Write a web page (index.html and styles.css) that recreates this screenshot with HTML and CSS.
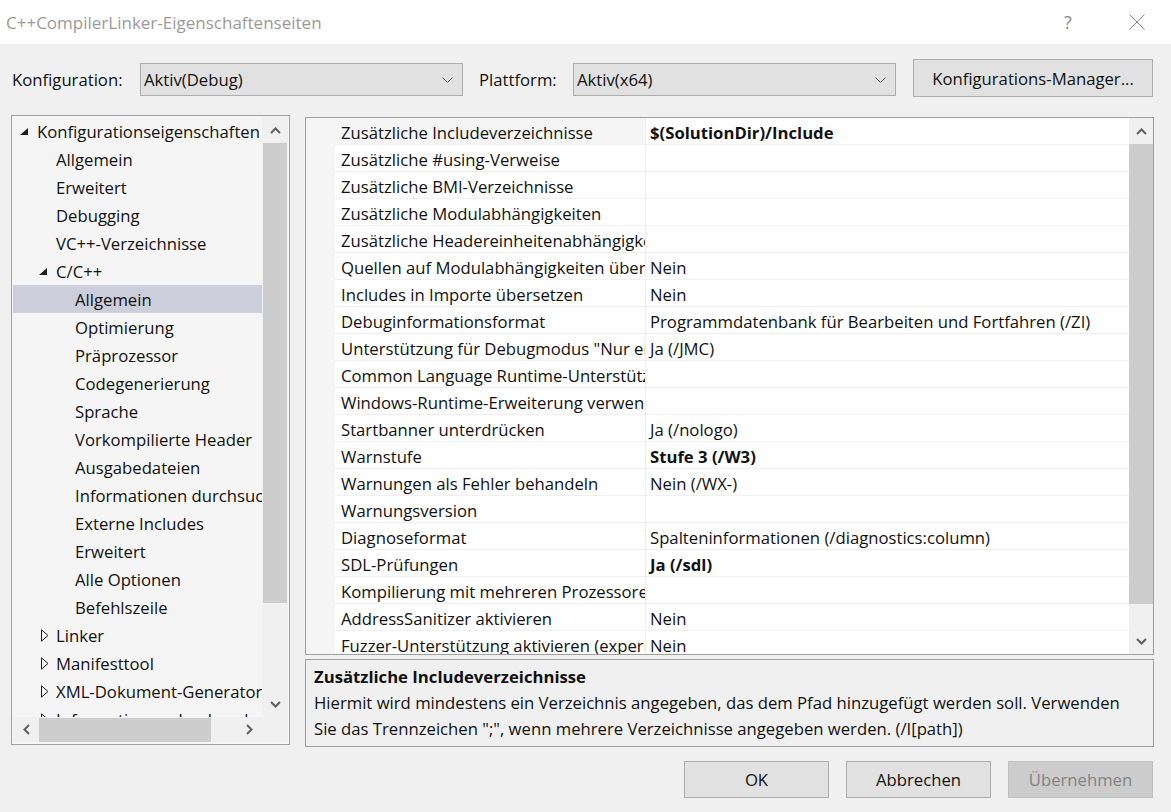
FILE: index.html
```html
<!DOCTYPE html>
<html lang="de">
<head>
<meta charset="utf-8">
<title>C++CompilerLinker-Eigenschaftenseiten</title>
<link rel="stylesheet" href="styles.css">
</head>
<body>
<div class="dialog">
  <header class="titlebar">
    <span class="title">C++CompilerLinker-Eigenschaftenseiten</span>
    <span class="tb-btn tb-help">?</span>
    <span class="tb-btn tb-close">
      <svg width="16" height="16" viewBox="0 0 16 16"><path d="M0.5 0.5 L15.5 15.5 M15.5 0.5 L0.5 15.5" stroke="#8a8a8a" stroke-width="1" fill="none"/></svg>
    </span>
  </header>

  <div class="content">
    <div class="config-row">
      <span class="lbl lbl-config">Konfiguration:</span>
      <div class="select">
        <span class="select-text">Aktiv(Debug)</span>
        <svg class="chev" width="11" height="6" viewBox="0 0 11 6"><path d="M0.5 0.5 L5.5 5.5 L10.5 0.5" stroke="#5a5a5a" stroke-width="1" fill="none"/></svg>
      </div>
      <span class="lbl lbl-plat">Plattform:</span>
      <div class="select">
        <span class="select-text">Aktiv(x64)</span>
        <svg class="chev" width="11" height="6" viewBox="0 0 11 6"><path d="M0.5 0.5 L5.5 5.5 L10.5 0.5" stroke="#5a5a5a" stroke-width="1" fill="none"/></svg>
      </div>
      <button class="btn btn-manager">Konfigurations-Manager...</button>
    </div>

    <div class="main">
      <div class="tree">
        <div class="tree-top">
          <div class="tree-list">
            <div class="trow lvl0"><span class="tog"><svg width="8" height="7" viewBox="0 0 8 7"><path d="M8 0 L8 7 L0 7 Z" fill="#1e1e1e"/></svg></span>Konfigurationseigenschaften</div>
            <div class="trow lvl1"><span class="tog"></span>Allgemein</div>
            <div class="trow lvl1"><span class="tog"></span>Erweitert</div>
            <div class="trow lvl1"><span class="tog"></span>Debugging</div>
            <div class="trow lvl1"><span class="tog"></span>VC++-Verzeichnisse</div>
            <div class="trow lvl0b"><span class="tog"><svg width="8" height="7" viewBox="0 0 8 7"><path d="M8 0 L8 7 L0 7 Z" fill="#1e1e1e"/></svg></span>C/C++</div>
            <div class="trow lvl2 selected"><span class="tog"></span>Allgemein</div>
            <div class="trow lvl2"><span class="tog"></span>Optimierung</div>
            <div class="trow lvl2"><span class="tog"></span>Präprozessor</div>
            <div class="trow lvl2"><span class="tog"></span>Codegenerierung</div>
            <div class="trow lvl2"><span class="tog"></span>Sprache</div>
            <div class="trow lvl2"><span class="tog"></span>Vorkompilierte Header</div>
            <div class="trow lvl2"><span class="tog"></span>Ausgabedateien</div>
            <div class="trow lvl2"><span class="tog"></span>Informationen durchsuchen</div>
            <div class="trow lvl2"><span class="tog"></span>Externe Includes</div>
            <div class="trow lvl2"><span class="tog"></span>Erweitert</div>
            <div class="trow lvl2"><span class="tog"></span>Alle Optionen</div>
            <div class="trow lvl2"><span class="tog"></span>Befehlszeile</div>
            <div class="trow lvl0b"><span class="tog tog-c"><svg width="8" height="13" viewBox="0 0 8 13"><path d="M0.5 0.8 L7 6.5 L0.5 12.2 Z" fill="none" stroke="#1e1e1e" stroke-width="1"/></svg></span>Linker</div>
            <div class="trow lvl0b"><span class="tog tog-c"><svg width="8" height="13" viewBox="0 0 8 13"><path d="M0.5 0.8 L7 6.5 L0.5 12.2 Z" fill="none" stroke="#1e1e1e" stroke-width="1"/></svg></span>Manifesttool</div>
            <div class="trow lvl0b"><span class="tog tog-c"><svg width="8" height="13" viewBox="0 0 8 13"><path d="M0.5 0.8 L7 6.5 L0.5 12.2 Z" fill="none" stroke="#1e1e1e" stroke-width="1"/></svg></span>XML-Dokument-Generator</div>
            <div class="trow lvl0b"><span class="tog tog-c"><svg width="8" height="13" viewBox="0 0 8 13"><path d="M0.5 0.8 L7 6.5 L0.5 12.2 Z" fill="none" stroke="#1e1e1e" stroke-width="1"/></svg></span>Informationen durchsuchen</div>
          </div>
          <div class="vscroll tree-vscroll">
            <div class="arrow-box"><svg width="11" height="7" viewBox="0 0 11 7"><path d="M1 6 L5.5 1.5 L10 6" stroke="#606060" stroke-width="2" fill="none"/></svg></div>
            <div class="vthumb tree-vthumb"></div>
            <div class="vspace"></div>
            <div class="arrow-box"><svg width="11" height="7" viewBox="0 0 11 7"><path d="M1 1 L5.5 5.5 L10 1" stroke="#606060" stroke-width="2" fill="none"/></svg></div>
          </div>
        </div>
        <div class="hscroll-row">
          <div class="hscroll">
            <div class="harrow-box"><svg width="7" height="11" viewBox="0 0 7 11"><path d="M6 1 L1.5 5.5 L6 10" stroke="#606060" stroke-width="2" fill="none"/></svg></div>
            <div class="hthumb"></div>
            <div class="hspace"></div>
            <div class="harrow-box"><svg width="7" height="11" viewBox="0 0 7 11"><path d="M1 1 L5.5 5.5 L1 10" stroke="#606060" stroke-width="2" fill="none"/></svg></div>
          </div>
          <div class="corner"></div>
        </div>
      </div>

      <div class="right">
        <div class="grid">
          <div class="gutter"></div>
          <div class="grid-rows">
            <div class="prow sel"><div class="pname">Zusätzliche Includeverzeichnisse</div><div class="pval b">$(SolutionDir)/Include</div></div>
            <div class="prow"><div class="pname">Zusätzliche #using-Verweise</div><div class="pval"></div></div>
            <div class="prow"><div class="pname">Zusätzliche BMI-Verzeichnisse</div><div class="pval"></div></div>
            <div class="prow"><div class="pname">Zusätzliche Modulabhängigkeiten</div><div class="pval"></div></div>
            <div class="prow"><div class="pname">Zusätzliche Headereinheitenabhängigkeiten</div><div class="pval"></div></div>
            <div class="prow"><div class="pname">Quellen auf Modulabhängigkeiten überprüfen</div><div class="pval">Nein</div></div>
            <div class="prow"><div class="pname">Includes in Importe übersetzen</div><div class="pval">Nein</div></div>
            <div class="prow"><div class="pname">Debuginformationsformat</div><div class="pval">Programmdatenbank für Bearbeiten und Fortfahren (/ZI)</div></div>
            <div class="prow"><div class="pname">Unterstützung für Debugmodus "Nur eigenen Code"</div><div class="pval">Ja (/JMC)</div></div>
            <div class="prow"><div class="pname">Common Language Runtime-Unterstützung</div><div class="pval"></div></div>
            <div class="prow"><div class="pname">Windows-Runtime-Erweiterung verwenden</div><div class="pval"></div></div>
            <div class="prow"><div class="pname">Startbanner unterdrücken</div><div class="pval">Ja (/nologo)</div></div>
            <div class="prow"><div class="pname">Warnstufe</div><div class="pval b">Stufe 3 (/W3)</div></div>
            <div class="prow"><div class="pname">Warnungen als Fehler behandeln</div><div class="pval">Nein (/WX-)</div></div>
            <div class="prow"><div class="pname">Warnungsversion</div><div class="pval"></div></div>
            <div class="prow"><div class="pname">Diagnoseformat</div><div class="pval">Spalteninformationen (/diagnostics:column)</div></div>
            <div class="prow"><div class="pname">SDL-Prüfungen</div><div class="pval b">Ja (/sdl)</div></div>
            <div class="prow"><div class="pname">Kompilierung mit mehreren Prozessoren</div><div class="pval"></div></div>
            <div class="prow"><div class="pname">AddressSanitizer aktivieren</div><div class="pval">Nein</div></div>
            <div class="prow"><div class="pname">Fuzzer-Unterstützung aktivieren (experimentell)</div><div class="pval">Nein</div></div>
          </div>
          <div class="vscroll grid-vscroll">
            <div class="arrow-box"><svg width="11" height="7" viewBox="0 0 11 7"><path d="M1 6 L5.5 1.5 L10 6" stroke="#606060" stroke-width="2" fill="none"/></svg></div>
            <div class="vthumb grid-vthumb"></div>
            <div class="vspace"></div>
            <div class="arrow-box"><svg width="11" height="7" viewBox="0 0 11 7"><path d="M1 1 L5.5 5.5 L10 1" stroke="#606060" stroke-width="2" fill="none"/></svg></div>
          </div>
        </div>
        <div class="desc">
          <div class="desc-title">Zusätzliche Includeverzeichnisse</div>
          <div class="desc-line">Hiermit wird mindestens ein Verzeichnis angegeben, das dem Pfad hinzugefügt werden soll. Verwenden</div>
          <div class="desc-line">Sie das Trennzeichen ";", wenn mehrere Verzeichnisse angegeben werden. (/I[path])</div>
        </div>
      </div>
    </div>

    <div class="buttons">
      <button class="btn btn-dlg">OK</button>
      <button class="btn btn-dlg">Abbrechen</button>
      <button class="btn btn-dlg btn-disabled">Übernehmen</button>
    </div>
  </div>
</div>
</body>
</html>
```

FILE: styles.css
```css
* { box-sizing: border-box; }
html, body { margin: 0; padding: 0; }
body {
  width: 1171px;
  height: 812px;
  overflow: hidden;
  background: #f0f0f0;
  font-family: "Open Sans", "Noto Sans", sans-serif;
  font-size: 16.7px;
  color: #111;
}
.dialog { width: 1171px; height: 812px; }

/* title bar */
.titlebar {
  height: 44px;
  background: #fff;
  display: flex;
  align-items: center;
  padding-right: 11px;
}
.title {
  flex: 1;
  padding-left: 6px;
  font-size: 17px;
  color: #9a9a9a;
  white-space: nowrap;
}
.tb-btn {
  width: 46px;
  height: 44px;
  display: flex;
  align-items: center;
  justify-content: center;
}
.tb-help { color: #8a8a8a; font-size: 18px; margin-right: 23px; }

.content { padding: 0 17px 0 11px; }

/* configuration row */
.config-row {
  margin-top: 15px;
  height: 38px;
  display: flex;
  align-items: flex-start;
}
.lbl {
  margin-top: 4px;
  height: 33px;
  line-height: 33px;
  white-space: nowrap;
}
.lbl-config { width: 129px; padding-left: 1px; }
.lbl-plat { width: 94px; margin-left: 16px; padding-left: 0; }
.select {
  margin-top: 4px;
  width: 323px;
  height: 33px;
  background: #e1e1e1;
  border: 1px solid #adadad;
  display: flex;
  align-items: center;
  padding: 0 9px 0 3px;
}
.select-text { flex: 1; }
.btn {
  font-family: inherit;
  font-size: 16.7px;
  color: #111;
  background: #e1e1e1;
  border: 1px solid #adadad;
  padding: 0;
  border-radius: 0;
}
.btn-manager {
  margin-left: 17px;
  width: 240px;
  height: 38px;
}

/* main area */
.main {
  margin-top: 18px;
  display: flex;
  gap: 15px;
}

/* tree */
.tree {
  width: 279px;
  height: 630px;
  border: 1px solid #a0a0a0;
  background: #f5f5f5;
  padding: 1px 1px 2px 1px;
  display: flex;
  flex-direction: column;
}
.tree-top {
  height: 600px;
  display: flex;
}
.tree-list {
  width: 249px;
  overflow: hidden;
  padding-top: 0;
}
.trow {
  height: 28px;
  display: flex;
  align-items: center;
  white-space: nowrap;
  color: #111;
}
.tog {
  width: 17px;
  flex: none;
  display: flex;
  align-items: center;
}
.tog-c { padding-left: 2px; }
.lvl0 { padding-left: 7px; }
.lvl0b { padding-left: 26px; }
.lvl1 { padding-left: 26px; }
.lvl2 { padding-left: 45px; }
.trow.selected { background: #cccedb; }

.vscroll {
  width: 26px;
  background: #f0f0f0;
  display: flex;
  flex-direction: column;
}
.arrow-box {
  height: 26px;
  display: flex;
  align-items: center;
  justify-content: center;
  flex: none;
}
.vthumb { background: #cdcdcd; margin: 0 1px; flex: none; }
.tree-vthumb { height: 460px; }
.vspace { flex: 1; }

.hscroll-row { height: 25px; display: flex; }
.hscroll {
  width: 249px;
  background: #f0f0f0;
  display: flex;
}
.harrow-box {
  width: 26px;
  display: flex;
  align-items: center;
  justify-content: center;
  flex: none;
}
.hthumb {
  width: 172px;
  background: #cdcdcd;
  margin: 1px 0 0 0;
  flex: none;
}
.hspace { flex: 1; }
.corner { width: 26px; background: #f0f0f0; }

/* property grid */
.right {
  width: 849px;
  display: flex;
  flex-direction: column;
}
.grid {
  margin-top: 2px;
  height: 538px;
  border: 1px solid #a0a0a0;
  background: #fff;
  display: flex;
}
.gutter { width: 29px; background: #f5f5f5; flex: none; }
.grid-rows { width: 794px; overflow: hidden; flex: none; }
.prow {
  height: 27px;
  display: flex;
  border-bottom: 1px solid #f0f0f0;
  background: #fff;
}
.pname {
  width: 311px;
  flex: none;
  padding-left: 6px;
  padding-top: 3px;
  line-height: 23px;
  white-space: nowrap;
  overflow: hidden;
  border-right: 1px solid #f0f0f0;
}
.prow.sel .pname { background: #f5f5f5; }
.pval {
  flex: 1;
  padding-left: 4px;
  padding-top: 3px;
  line-height: 23px;
  white-space: nowrap;
  overflow: hidden;
}
.b { font-weight: 700; }
.grid-vscroll { width: 24px; flex: none; }
.grid-vscroll .vthumb { margin: 0; }
.grid-vthumb { height: 460px; }

/* description */
.desc {
  margin-top: 4px;
  height: 88px;
  border: 1px solid #a0a0a0;
  background: #f0f0f0;
  padding: 4px 8px 0 8px;
  white-space: nowrap;
  overflow: hidden;
}
.desc-title { font-weight: 700; line-height: 26px; }
.desc-line { line-height: 26px; }

/* dialog buttons */
.buttons {
  margin-top: 14px;
  display: flex;
  justify-content: flex-end;
  gap: 17px;
  padding-right: 1px;
}
.btn-dlg { width: 145px; height: 37px; }
.btn-disabled { background: #cccccc; border-color: #bfbfbf; color: #838383; }
```
